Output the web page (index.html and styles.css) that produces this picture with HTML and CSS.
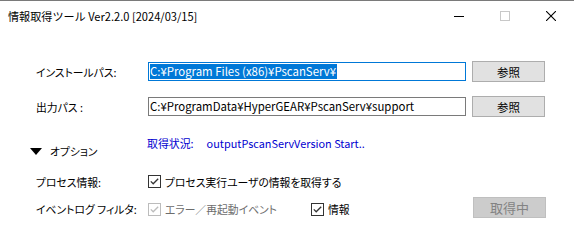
FILE: index.html
```html
<!DOCTYPE html>
<html lang="ja">
<head>
<meta charset="utf-8">
<title>情報取得ツール</title>
<link rel="stylesheet" href="styles.css">
</head>
<body>
<div class="window">
  <div class="titlebar">
    <div class="title">情報取得ツール Ver2.2.0 [2024/03/15]</div>
    <div class="caption">
      <div class="cbtn"><svg width="10" height="10" viewBox="0 0 10 10"><line x1="0" y1="5.5" x2="10" y2="5.5" stroke="#000" stroke-width="1"/></svg></div>
      <div class="cbtn"><svg width="10" height="10" viewBox="0 0 10 10"><rect x="0.5" y="0.5" width="9" height="9" fill="none" stroke="#c8c8c8" stroke-width="1"/></svg></div>
      <div class="cbtn"><svg width="10" height="10" viewBox="0 0 10 10"><path d="M0 0 L10 10 M10 0 L0 10" stroke="#000" stroke-width="1.1"/></svg></div>
    </div>
  </div>
  <div class="form">
    <div class="row">
      <div class="label">インストールパス:</div>
      <div class="textbox focused"><span class="sel">C:¥Program Files (x86)¥PscanServ¥</span></div>
      <div class="button">参照</div>
    </div>
    <div class="row">
      <div class="label">出力パス :</div>
      <div class="textbox">C:¥ProgramData¥HyperGEAR¥PscanServ¥support</div>
      <div class="button">参照</div>
    </div>
    <div class="band">
      <div class="toggle">
        <svg width="12" height="7" viewBox="0 0 12 7"><path d="M0 0 H12 L6 7 Z" fill="#000"/></svg>
        <span>オプション</span>
      </div>
      <div class="status"><span class="status-key">取得状況:</span><span>outputPscanServVersion Start..</span></div>
    </div>
    <div class="row opt">
      <div class="label">プロセス情報:</div>
      <div class="check">
        <svg class="box" width="13" height="13" viewBox="0 0 13 13"><rect x="0.5" y="0.5" width="12" height="12" fill="#fff" stroke="#333"/><path d="M2.8 6.4 L5.2 8.8 L10.2 3.8" fill="none" stroke="#333" stroke-width="1.3"/></svg>
        <span>プロセス実行ユーザの情報を取得する</span>
      </div>
    </div>
    <div class="row opt event">
      <div class="label">イベントログ フィルタ:</div>
      <div class="check disabled">
        <svg class="box" width="13" height="13" viewBox="0 0 13 13"><rect x="0.5" y="0.5" width="12" height="12" fill="#fff" stroke="#bcbcbc"/><path d="M2.8 6.4 L5.2 8.8 L10.2 3.8" fill="none" stroke="#bcbcbc" stroke-width="1.3"/></svg>
        <span>エラー／再起動イベント</span>
      </div>
      <div class="check info">
        <svg class="box" width="13" height="13" viewBox="0 0 13 13"><rect x="0.5" y="0.5" width="12" height="12" fill="#fff" stroke="#333"/><path d="M2.8 6.4 L5.2 8.8 L10.2 3.8" fill="none" stroke="#333" stroke-width="1.3"/></svg>
        <span>情報</span>
      </div>
      <div class="button busy">取得中</div>
    </div>
  </div>
</div>
</body>
</html>
```
FILE: styles.css
```css
html, body {
  margin: 0;
  padding: 0;
  background: #fff;
}
body {
  font-family: "Noto Sans CJK JP", "Noto Sans", sans-serif;
  font-size: 10.8px;
  color: #000;
  font-feature-settings: "palt";
}
.window {
  width: 574px;
  height: 244px;
  box-sizing: border-box;
  border-top: 1px solid #7a7a7a;
  display: flex;
  flex-direction: column;
}
.titlebar {
  height: 30px;
  display: flex;
  align-items: center;
  justify-content: space-between;
}
.title {
  padding-left: 8px;
  font-size: 11.1px;
  line-height: 14px;
  font-feature-settings: normal;
}
.caption {
  display: flex;
  height: 30px;
}
.cbtn {
  width: 46px;
  height: 30px;
  display: flex;
  align-items: center;
  justify-content: center;
}
.cbtn svg { display: block; margin-top: -1px; }
.form {
  padding: 30px 28px 0 36px;
  display: flex;
  flex-direction: column;
}
.row {
  display: flex;
  align-items: center;
  height: 21px;
}
.row + .row { margin-top: 14px; }
.label {
  width: 112px;
  flex: none;
  line-height: 14px;
  white-space: nowrap;
}
.textbox {
  width: 318px;
  height: 19px;
  box-sizing: border-box;
  border: 1px solid #7a7a7a;
  padding: 0 1px;
  font-size: 11.4px;
  line-height: 17px;
  font-feature-settings: normal;
  white-space: nowrap;
  overflow: hidden;
}
.textbox.focused { border-color: #0078d7; }
.sel {
  background: #0078d7;
  color: #fff;
  display: inline-block;
  line-height: 15px;
  padding-right: 1px;
}
.button {
  margin-left: 6px;
  width: 73px;
  height: 21px;
  box-sizing: border-box;
  border: 1px solid #adadad;
  background: #e1e1e1;
  display: flex;
  align-items: center;
  justify-content: center;
  line-height: 14px;
  font-size: 11.5px;
}
.band {
  display: flex;
  align-items: flex-start;
  margin-top: 19px;
  height: 22px;
}
.toggle {
  width: 117px;
  margin-left: -6px;
  margin-top: 8px;
  display: flex;
  align-items: center;
  gap: 8px;
  line-height: 14px;
}
.toggle svg { display: block; }
.status {
  color: #0000d0;
  line-height: 14px;
  font-size: 10.9px;
  font-feature-settings: normal;
}
.status-key {
  margin-right: 13px;
  font-feature-settings: "palt";
}
.row.opt { margin-top: 13px; }
.row.event { margin-top: 5px; }
.check {
  display: flex;
  align-items: center;
  gap: 4px;
  line-height: 14px;
}
.check .box { display: block; }
.check.disabled { color: #6d6d6d; }
.event .check { margin-top: 3px; }
.event .label { margin-top: 3px; }
.check.info { margin-left: 34px; }
.button.busy {
  margin-left: auto;
  background: #cccccc;
  border-color: #bfbfbf;
  color: #838383;
  font-size: 13px;
}
```
